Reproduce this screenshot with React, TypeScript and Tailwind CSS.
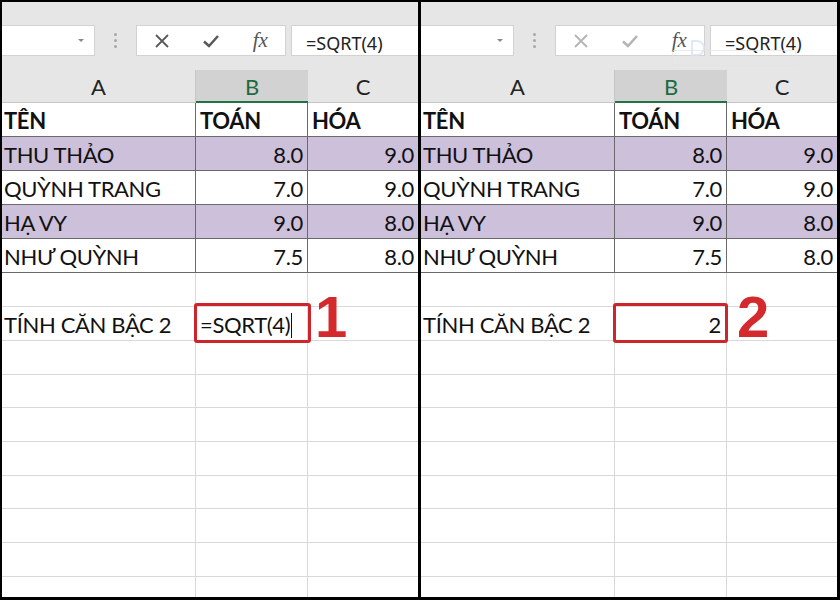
import React from "react";

const cellFont = { fontFamily: "Lato, 'Noto Sans', sans-serif" };

type Row = { a: string; b: string; c: string; purple?: boolean; bold?: boolean };

const tableRows: Row[] = [
  { a: "TÊN", b: "TOÁN", c: "HÓA", bold: true },
  { a: "THU THẢO", b: "8.0", c: "9.0", purple: true },
  { a: "QUỲNH TRANG", b: "7.0", c: "9.0" },
  { a: "HẠ VY", b: "9.0", c: "8.0", purple: true },
  { a: "NHƯ QUỲNH", b: "7.5", c: "8.0" },
];

const emptyHeights = [34, 34, 34, 33, 34, 34, 33, 34, 34, 34];

function Toolbar({ disabled }: { disabled: boolean }) {
  const iconColor = disabled ? "#b4b4b4" : "#5a5a5a";
  return (
    <div className="flex h-[68px] shrink-0 items-start bg-[#e6e6e6] pt-[23px]">
      <div className="flex h-[31px] w-[93px] items-center justify-end border-y border-r border-[#d2d2d2] bg-white pr-[9px]">
        <svg width="8" height="5" viewBox="0 0 8 5">
          <path d="M1 1 L4 4 L7 1 Z" fill="#8a8a8a" />
        </svg>
      </div>
      <div className="flex h-[31px] w-[41px] flex-col items-center justify-center gap-[3px]">
        <div className="h-[3px] w-[3px] rounded-full bg-[#a8a8a8]" />
        <div className="h-[3px] w-[3px] rounded-full bg-[#a8a8a8]" />
        <div className="h-[3px] w-[3px] rounded-full bg-[#a8a8a8]" />
      </div>
      <div className="grid h-[31px] w-[150px] grid-cols-3 items-center border border-[#d2d2d2] bg-white">
        <div className="flex justify-center">
          <svg width="16" height="16" viewBox="0 0 16 16">
            <path d="M2 2 L14 14 M14 2 L2 14" stroke={iconColor} strokeWidth="1.8" />
          </svg>
        </div>
        <div className="flex justify-center">
          <svg width="18" height="16" viewBox="0 0 18 16">
            <path d="M2 8.5 L7 13 L16 3" stroke={iconColor} strokeWidth="2.6" fill="none" />
          </svg>
        </div>
        <div className="flex justify-center">
          <span
            className="text-[21px] italic leading-none text-[#555]"
            style={{ fontFamily: "'Liberation Serif', serif" }}
          >
            fx
          </span>
        </div>
      </div>
      <div
        className="ml-[5px] flex h-[31px] flex-1 items-center border-y border-l border-[#d2d2d2] bg-white pl-[14px] pt-[5px] text-[18px] leading-none text-[#222]"
        style={{ fontFamily: "'Noto Sans', sans-serif" }}
      >
        =SQRT(4)
      </div>
    </div>
  );
}

function HeaderRow() {
  return (
    <div className="flex h-[33px] shrink-0 bg-[#e6e6e6] text-[22px] leading-none text-[#222]" style={cellFont}>
      <div className="flex w-[194px] items-center justify-center border-r border-b border-[#c6c6c6] pt-[2px]">A</div>
      <div className="flex w-[112px] items-center justify-center border-b-2 border-[#217346] bg-[#d2d2d2] pt-[2px] text-[#1d6b40]">
        B
      </div>
      <div className="flex flex-1 items-center justify-center border-b border-[#c6c6c6] pt-[2px]">C</div>
    </div>
  );
}

function Panel({ left }: { left: boolean }) {
  return (
    <div className="relative flex h-[595px] w-[416px] flex-col overflow-hidden bg-white">
      <Toolbar disabled={!left} />
      <HeaderRow />
      <div className="flex shrink-0 flex-col text-[22px] tracking-[-0.35px] text-[#111]" style={cellFont}>
        {tableRows.map((r, i) => (
          <div
            key={i}
            className={`flex h-[34px] shrink-0 leading-[30px] ${r.purple ? "bg-[#ccc0da]" : "bg-white"} ${r.bold ? "font-bold" : ""}`}
          >
            <div className="w-[194px] whitespace-nowrap border-r border-b border-[#6a6a6a] pl-[2px] pt-[3px]">{r.a}</div>
            <div
              className={`w-[112px] border-r border-b border-[#6a6a6a] pt-[3px] ${r.bold ? "pl-[4px] text-left" : "pr-[4px] text-right"}`}
            >
              {r.b}
            </div>
            <div className={`flex-1 border-b border-[#6a6a6a] pt-[3px] ${r.bold ? "pl-[4px] text-left" : "pr-[4px] text-right"}`}>
              {r.c}
            </div>
          </div>
        ))}
        {emptyHeights.map((h, i) => (
          <div key={"e" + i} className="flex shrink-0 leading-[30px]" style={{ height: h }}>
            <div className="w-[194px] whitespace-nowrap border-r border-b border-[#d9d9d9] pl-[2px] pt-[3px]">
              {i === 1 ? "TÍNH CĂN BẬC 2" : ""}
            </div>
            <div className="w-[112px] border-r border-b border-[#d9d9d9] pt-[3px]">
              {i === 1 ? (
                left ? (
                  <div className="flex items-center pl-[4px]">
                    <span>=SQRT(4)</span>
                    <span className="ml-[1px] inline-block h-[25px] w-[1px] bg-[#111]" />
                  </div>
                ) : (
                  <div className="pr-[5px] text-right">2</div>
                )
              ) : null}
            </div>
            <div className="flex-1 border-b border-[#d9d9d9]" />
          </div>
        ))}
      </div>

      {/* red annotation box */}
      <div
        className={`absolute top-[301px] h-[40px] rounded-[3px] border-[3px] border-[#cc252c] ${left ? "left-[192px] w-[117px]" : "left-[192px] w-[115px]"}`}
      />
      <div
        className="absolute top-[286px] text-[58px] font-bold leading-none text-[#d42a2e]"
        style={{ left: left ? 313 : 316, fontFamily: "'Liberation Sans', Arial, sans-serif" }}
      >
        {left ? "1" : "2"}
      </div>

      {!left && (
        <>
          <div className="absolute left-[251px] top-[48px] h-[16px] w-[124px] rounded-[2px] border border-[#e2e2e2] opacity-70" />
          <div className="absolute left-[270px] top-[38px] h-[16px] w-[14px] rounded-r-full border-2 border-[#d6e4f2] opacity-80" />
        </>
      )}
    </div>
  );
}

export default function App() {
  return (
    <div className="flex h-[600px] w-[840px] gap-[3px] bg-black pl-[2px] pt-[2px]">
      <Panel left={true} />
      <Panel left={false} />
    </div>
  );
}
